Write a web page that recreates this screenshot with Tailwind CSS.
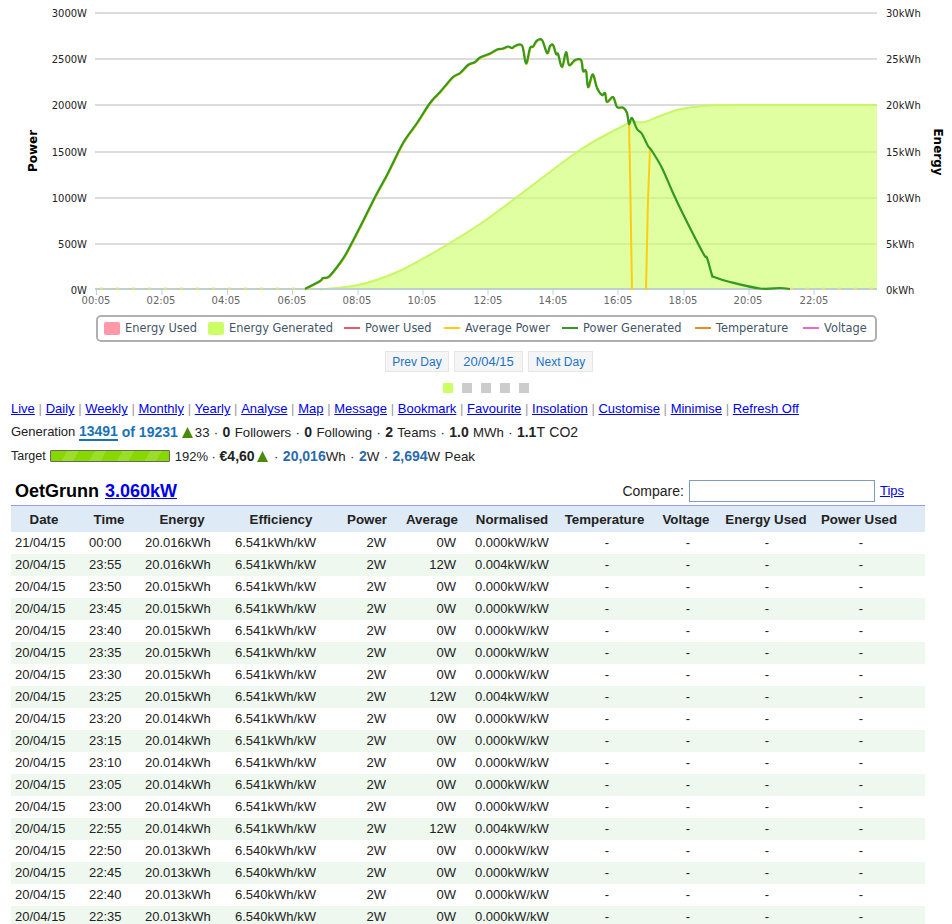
<!DOCTYPE html>
<html lang="en">
<head>
    <meta charset="UTF-8">
    <title>OetGrunn</title>
    <script src="https://cdn.jsdelivr.net/npm/@tailwindcss/browser@4"></script>
</head>
<body class="bg-white">
<div class="w-[952px] h-[924px] overflow-hidden font-['Liberation_Sans',Arial,sans-serif] text-[#222]">

    <!-- Chart -->
    <svg class="block" width="952" height="310" viewBox="0 0 952 310" font-family="DejaVu Sans, sans-serif" font-size="10">
        <g stroke="#dcdcdc" stroke-width="2">
            <path d="M95 13H877M95 59H877M95 105H877M95 152H877M95 198H877M95 244H877"/>
        </g>
        <path id="energyArea" fill="#ccff66" fill-opacity="0.62"/>
        <path id="energyLine" fill="none" stroke="#c8f766" stroke-width="2"/>
        <path d="M95 289H877" stroke="#bcd0cc" stroke-width="2"/>
        <path d="M96.5 290V295M162 290V295M227.5 290V295M292.5 290V295M358 290V295M423 290V295M488 290V295M553 290V295M618 290V295M684 290V295M749 290V295M814 290V295" stroke="#c0d0e0" stroke-width="1"/>
        <path d="M100 288.6H305M790 288.6H877" stroke="#f5dc70" stroke-width="2" stroke-dasharray="3 13"/>
        <path id="averageLine" fill="none" stroke="#ffcc11" stroke-width="2" transform="translate(0.5 0.5)"/>
        <path d="M627 113 L629 124 L630 170 L632 290 M646 290 L648 200 L650 148" fill="none" stroke="#ffcc11" stroke-width="2"/>
        <path id="powerLine" fill="none" stroke="#339922" stroke-width="2.2" stroke-linejoin="round"/>

        <g text-anchor="end" fill="#222">
            <text x="87" y="17">3000W</text>
            <text x="87" y="63">2500W</text>
            <text x="87" y="109">2000W</text>
            <text x="87" y="156">1500W</text>
            <text x="87" y="202">1000W</text>
            <text x="87" y="248">500W</text>
            <text x="87" y="294">0W</text>
        </g>
        <g fill="#222">
            <text x="886" y="17">30kWh</text>
            <text x="886" y="63">25kWh</text>
            <text x="886" y="109">20kWh</text>
            <text x="886" y="156">15kWh</text>
            <text x="886" y="202">10kWh</text>
            <text x="886" y="248">5kWh</text>
            <text x="886" y="294">0kWh</text>
        </g>
        <g text-anchor="middle" fill="#666">
            <text x="96" y="304">00:05</text>
            <text x="161" y="304">02:05</text>
            <text x="226" y="304">04:05</text>
            <text x="292" y="304">06:05</text>
            <text x="357" y="304">08:05</text>
            <text x="422" y="304">10:05</text>
            <text x="488" y="304">12:05</text>
            <text x="553" y="304">14:05</text>
            <text x="618" y="304">16:05</text>
            <text x="683" y="304">18:05</text>
            <text x="748" y="304">20:05</text>
            <text x="814" y="304">22:05</text>
        </g>
        <text transform="translate(37 151) rotate(-90)" text-anchor="middle" font-weight="bold" font-size="12" fill="#000">Power</text>
        <text transform="translate(934 152) rotate(90)" text-anchor="middle" font-weight="bold" font-size="12" fill="#000">Energy</text>
    </svg>

    <!-- Legend -->
    <div class="flex items-center ml-[96px] mt-[5px] w-[781px] h-[27px] border-2 border-[#b0b0b0] rounded-[5px] font-['DejaVu_Sans',sans-serif] text-[11.4px] text-[#445566]">
        <div class="flex items-center w-[110px] pl-[6px]"><span class="w-4 h-[13px] rounded-[2px] bg-[#ff99a8] mr-[5px]"></span>Energy Used</div>
        <div class="flex items-center w-[136px]"><span class="w-4 h-[13px] rounded-[2px] bg-[#ccff66] mr-[5px]"></span>Energy Generated</div>
        <div class="flex items-center w-[100px]"><span class="w-4 h-[2px] bg-[#ee5566] mr-[5px]"></span>Power Used</div>
        <div class="flex items-center w-[118px]"><span class="w-4 h-[2px] bg-[#ffcc11] mr-[5px]"></span>Average Power</div>
        <div class="flex items-center w-[133px]"><span class="w-4 h-[2px] bg-[#339922] mr-[5px]"></span>Power Generated</div>
        <div class="flex items-center w-[108px]"><span class="w-4 h-[2px] bg-[#ee8822] mr-[5px]"></span>Temperature</div>
        <div class="flex items-center"><span class="w-4 h-[2px] bg-[#ee66cc] mr-[5px]"></span>Voltage</div>
    </div>

    <!-- Day buttons -->
    <div class="flex gap-[5px] ml-[385px] mt-[9px] text-[12px] text-[#1a73c8]">
        <button class="w-[64px] h-[21px] bg-[#f5f5f5] border border-[#e6e6e6]">Prev Day</button>
        <button class="w-[69px] h-[21px] bg-[#f5f5f5] border border-[#e6e6e6] text-[13px]">20/04/15</button>
        <button class="w-[65px] h-[21px] bg-[#f5f5f5] border border-[#e6e6e6]">Next Day</button>
    </div>

    <!-- Pager squares -->
    <div class="flex gap-[9px] ml-[443px] mt-[11px]">
        <span class="w-[10px] h-[10px] bg-[#ccff66]"></span>
        <span class="w-[10px] h-[10px] bg-[#ccc]"></span>
        <span class="w-[10px] h-[10px] bg-[#ccc]"></span>
        <span class="w-[10px] h-[10px] bg-[#ccc]"></span>
        <span class="w-[10px] h-[10px] bg-[#ccc]"></span>
    </div>

    <!-- Links -->
    <div class="flex items-center gap-[3.7px] ml-[11px] mt-[8px] h-[16px] text-[13px] text-[#999]">
        <a href="#" class="text-[#0000ee] underline">Live</a>|
        <a href="#" class="text-[#0000ee] underline">Daily</a>|
        <a href="#" class="text-[#0000ee] underline">Weekly</a>|
        <a href="#" class="text-[#0000ee] underline">Monthly</a>|
        <a href="#" class="text-[#0000ee] underline">Yearly</a>|
        <a href="#" class="text-[#0000ee] underline">Analyse</a>|
        <a href="#" class="text-[#0000ee] underline">Map</a>|
        <a href="#" class="text-[#0000ee] underline">Message</a>|
        <a href="#" class="text-[#0000ee] underline">Bookmark</a>|
        <a href="#" class="text-[#0000ee] underline">Favourite</a>|
        <a href="#" class="text-[#0000ee] underline">Insolation</a>|
        <a href="#" class="text-[#0000ee] underline">Customise</a>|
        <a href="#" class="text-[#0000ee] underline">Minimise</a>|
        <a href="#" class="text-[#0000ee] underline">Refresh Off</a>
    </div>

    <!-- Stats -->
    <div class="flex items-center ml-[11px] mt-[7px] h-[16px] text-[14px] whitespace-pre">
        <span class="text-[13px]">Generation </span><a href="#" class="font-bold text-[#1a73b5] border-b-2 border-[#1a73b5] leading-[15px]">13491</a><span class="font-bold text-[#1a73b5]"> of 19231</span>
        <svg class="ml-[4px] mr-[2px]" width="11" height="11" viewBox="0 0 11 11"><polygon points="5.5,0 11,11 0,11" fill="#4a8a0a"/></svg>
        <span class="text-[13.2px] [word-spacing:0.7px]">33 · <b class="text-[14px]">0</b> Followers · <b class="text-[14px]">0</b> Following · <b class="text-[14px]">2</b> Teams · <b class="text-[14px]">1.0</b> MWh · <b class="text-[14px]">1.1</b><span class="text-[14px]">T CO2</span></span>
    </div>
    <div class="flex items-center ml-[11px] mt-[8px] h-[16px] text-[14px] whitespace-pre">
        <span class="text-[12.5px]">Target</span>
        <div class="ml-[4px] w-[120px] h-[12px] border border-[#666] rounded-[1px] bg-[repeating-linear-gradient(120deg,#88d800_0,#88d800_14px,#9ade28_14px,#9ade28_24px)]">
            <div class="h-[5px] bg-white/30"></div>
        </div>
        <span class="ml-[5px] text-[13px]">192% · <b class="text-[14px]">€4,60</b></span>
        <svg class="mx-[2px]" width="11" height="11" viewBox="0 0 11 11"><polygon points="5.5,0 11,11 0,11" fill="#4a8a0a"/></svg>
        <span class="text-[13.33px] [word-spacing:0.7px]"> · <b class="text-[14px] text-[#2a6ab0]">20,016</b>Wh · <b class="text-[14px] text-[#2a6ab0]">2</b>W · <b class="text-[14px] text-[#2a6ab0]">2,694</b>W Peak</span>
    </div>

    <!-- Title and compare -->
    <div class="flex items-center ml-[15px] mr-[48px] mt-[15px] h-[24px]">
        <h1 class="text-[18px] font-bold text-black [word-spacing:1px]">OetGrunn <a href="#" class="text-[#0000ee] underline">3.060kW</a></h1>
        <label class="ml-auto text-[14px]">Compare:</label>
        <input type="text" class="ml-[5px] w-[186px] h-[22px] border border-[#7f9db9]">
        <a href="#" class="ml-[5px] text-[13px] text-[#0000ee] underline">Tips</a>
    </div>

    <!-- Table -->
    <table class="mt-[2px] ml-[11px] w-[914px] table-fixed border-collapse text-[13px]">
        <colgroup>
            <col class="w-[66px]"><col class="w-[64px]"><col class="w-[82px]"><col class="w-[116px]">
            <col class="w-[56px]"><col class="w-[74px]"><col class="w-[86px]"><col class="w-[100px]">
            <col class="w-[66px]"><col class="w-[92px]"><col class="w-[112px]">
        </colgroup>
        <thead>
            <tr class="h-[26px] bg-[#dfeaf7] border-t border-[#9999ee] font-bold text-center text-[13.3px]">
                <th class="pt-[2px]">Date</th><th class="pt-[2px]">Time</th><th class="pt-[2px]">Energy</th><th class="pt-[2px]">Efficiency</th><th class="pt-[2px]">Power</th><th class="pt-[2px]">Average</th>
                <th class="pt-[2px]">Normalised</th><th class="pt-[2px] pr-[1px]">Temperature</th><th class="pt-[2px] pr-[4px]">Voltage</th><th class="pt-[2px] pr-[2px]">Energy Used</th><th class="pt-[2px] pr-5">Power Used</th>
            </tr>
        </thead>
        <tbody id="rows"></tbody>
    </table>
</div>

<script>
    const data = [
        ['21/04/15', '00:00', '20.016', '6.541', '0', '0.000'],
        ['20/04/15', '23:55', '20.016', '6.541', '12', '0.004'],
        ['20/04/15', '23:50', '20.015', '6.541', '0', '0.000'],
        ['20/04/15', '23:45', '20.015', '6.541', '0', '0.000'],
        ['20/04/15', '23:40', '20.015', '6.541', '0', '0.000'],
        ['20/04/15', '23:35', '20.015', '6.541', '0', '0.000'],
        ['20/04/15', '23:30', '20.015', '6.541', '0', '0.000'],
        ['20/04/15', '23:25', '20.015', '6.541', '12', '0.004'],
        ['20/04/15', '23:20', '20.014', '6.541', '0', '0.000'],
        ['20/04/15', '23:15', '20.014', '6.541', '0', '0.000'],
        ['20/04/15', '23:10', '20.014', '6.541', '0', '0.000'],
        ['20/04/15', '23:05', '20.014', '6.541', '0', '0.000'],
        ['20/04/15', '23:00', '20.014', '6.541', '0', '0.000'],
        ['20/04/15', '22:55', '20.014', '6.541', '12', '0.004'],
        ['20/04/15', '22:50', '20.013', '6.540', '0', '0.000'],
        ['20/04/15', '22:45', '20.013', '6.540', '0', '0.000'],
        ['20/04/15', '22:40', '20.013', '6.540', '0', '0.000'],
        ['20/04/15', '22:35', '20.013', '6.540', '0', '0.000']
    ];

    document.getElementById('rows').innerHTML = data.map((r, i) => `
        <tr class="h-[22px] ${i % 2 ? 'bg-[#eef8ee]' : 'bg-white'}">
            <td class="pt-[1px] pl-[4px]">${r[0]}</td>
            <td class="pt-[1px] pl-[12px]">${r[1]}</td>
            <td class="pt-[1px] pl-[4px]">${r[2]}kWh</td>
            <td class="pt-[1px] pl-[12px]">${r[3]}kWh/kW</td>
            <td class="pt-[1px] pr-[9px] text-right">2W</td>
            <td class="pt-[1px] pr-[13px] text-right">${r[4]}W</td>
            <td class="pt-[1px] pl-[6px]">${r[5]}kW/kW</td>
            <td class="pt-[1px] pl-[4px] text-center">-</td>
            <td class="pt-[1px] text-center">-</td>
            <td class="pt-[1px] text-center">-</td>
            <td class="pt-[1px] pr-[16px] text-center">-</td>
        </tr>`).join('');

    // chart series, in svg coordinates
    const energy = [[320,289.5],[358,285],[395,273],[433,253],[480,224],[517,197],[580,150],[627,124],[636,122],[645,122],[660,116],[677,110],[693,107],[710,105.5],[740,105],[877,105]];
    const power = [[305,289],[320,281],[323,278],[329,276.5],[340,263],[347,252],[360,227],[375,197],[388,173],[403,143],[417,123],[430,103],[440,92],[453,77],[460,73],[468,65],[475,62],[480,57.5],[490,53.5],[497,49.5],[503,48.5],[508,46.5],[512,48],[515,46],[522,45.5],[526,63.5],[530,48],[533,46.5],[537,40.5],[542,40],[547,53],[550,46],[553,45],[556,54],[558,54],[562,67],[566,52],[569,65],[575,60],[581,60],[583,71],[586,71],[588,87],[592,75],[594,77],[597,88],[602,95],[605,93],[607,102],[613,97],[617,107],[623,107.5],[627,113],[629,124],[632,118],[637,129],[642,134],[648,146],[652,151],[662,168],[673,193],[683,214],[703,253],[707,258],[712,275],[714,277],[730,282],[760,288.5],[780,288],[790,289]];

    // catmull-rom through the points so the lines don't look polygonal
    function smooth(pts) {
        let d = `M${pts[0][0]} ${pts[0][1]}`;
        for (let i = 0; i < pts.length - 1; i++) {
            const p0 = pts[i - 1] || pts[i], p1 = pts[i], p2 = pts[i + 1], p3 = pts[i + 2] || p2;
            const c1 = [p1[0] + (p2[0] - p0[0]) / 6, p1[1] + (p2[1] - p0[1]) / 6];
            const c2 = [p2[0] - (p3[0] - p1[0]) / 6, p2[1] - (p3[1] - p1[1]) / 6];
            d += `C${c1[0]} ${c1[1]} ${c2[0]} ${c2[1]} ${p2[0]} ${p2[1]}`;
        }
        return d;
    }

    const energyPath = smooth(energy);
    document.getElementById('energyLine').setAttribute('d', energyPath);
    document.getElementById('energyArea').setAttribute('d', energyPath + 'L877 289.5Z');
    document.getElementById('powerLine').setAttribute('d', smooth(power));
    document.getElementById('averageLine').setAttribute('d', smooth(power.slice(0, 53)));
</script>
</body>
</html>
